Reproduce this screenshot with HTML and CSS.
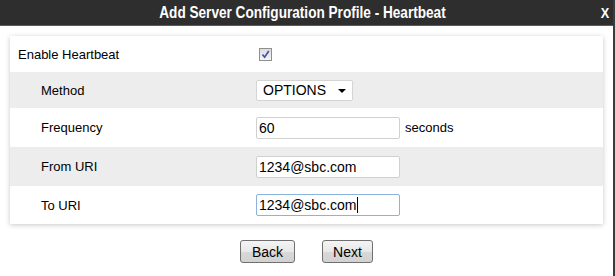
FILE: index.html
```html
<!DOCTYPE html>
<html>
<head>
  <title>Add Server Configuration Profile - Heartbeat</title>
  <link rel="stylesheet" href="styles.css">
</head>
<body>
  <div class="dialog">
    <div class="titlebar">
      <span class="title">Add Server Configuration Profile - Heartbeat</span>
      <span class="close">X</span>
    </div>

    <div class="card">
      <div class="row">
        <div class="label">Enable Heartbeat</div>
        <div class="control">
          <span class="checkbox">
            <svg width="9" height="9" viewBox="0 0 9 9"><path d="M1.5 4.5 L3.6 7.2 L7.8 1" fill="none" stroke="#3b4fa8" stroke-width="1.6"/></svg>
          </span>
        </div>
      </div>
      <div class="row alt sub">
        <div class="label">Method</div>
        <div class="control">
          <div class="select">OPTIONS <span class="arrow"></span></div>
        </div>
      </div>
      <div class="row sub tall">
        <div class="label">Frequency</div>
        <div class="control">
          <div class="field">60</div>
          <span class="unit">seconds</span>
        </div>
      </div>
      <div class="row alt sub tall">
        <div class="label">From URI</div>
        <div class="control">
          <div class="field">1234@sbc.com</div>
        </div>
      </div>
      <div class="row sub last">
        <div class="label">To URI</div>
        <div class="control">
          <div class="field focus">1234@sbc.com<span class="caret"></span></div>
        </div>
      </div>
    </div>

    <div class="buttons">
      <button class="btn back">Back</button>
      <button class="btn next">Next</button>
    </div>
  </div>
</body>
</html>
```

FILE: styles.css
```css
body {
  margin: 0;
  background-color: #3c3c3c;
  font-family: "Liberation Sans", Arial, sans-serif;
  font-size: 13px;
  color: #000000;
}

.dialog {
  width: 613px;
  height: 276px;
  background-color: #ffffff;
}

/* title bar */
.titlebar {
  height: 25px;
  padding-right: 8px;
  background-color: #2e2e2e;
  border-bottom: 1px solid #5c5c5c;
  display: flex;
  align-items: center;
  justify-content: center;
  position: relative;
  color: #ffffff;
}

/* narrow bold face, squeezed since no condensed font is installed */
.title {
  display: inline-block;
  font-family: "Liberation Sans", Arial, sans-serif;
  font-weight: bold;
  font-size: 16px;
  transform: scaleX(0.85);
  white-space: nowrap;
}

.close {
  position: absolute;
  right: 3px;
  top: 4px;
  font-family: "Liberation Sans", sans-serif;
  font-weight: bold;
  font-size: 15px;
  transform: scaleX(0.85);
}

/* form card */
.card {
  margin: 10px 10px 0 10px;
  background-color: #ffffff;
  box-shadow: 0 1px 5px rgba(0, 0, 0, 0.22);
}

.row {
  display: grid;
  grid-template-columns: 246px 1fr;
  align-items: center;
  height: 36px;
}

.row.tall {
  height: 39px;
}

.row.last {
  height: 38px;
}

.row.alt {
  background-color: #ededed;
}

.label {
  padding-left: 8px;
}

.row.sub .label {
  padding-left: 31px;
}

.control {
  display: flex;
  align-items: center;
}

.checkbox {
  width: 11px;
  height: 11px;
  margin-left: 3px;
  border: 1px solid #8f8f8f;
  background: linear-gradient(#dcdcdc, #f4f4f4);
  display: flex;
  align-items: center;
  justify-content: center;
}

.select {
  width: 89px;
  height: 19px;
  padding-left: 6px;
  border: 1px solid #d4d4d4;
  border-radius: 2px;
  background-color: #ffffff;
  font-size: 14px;
  line-height: 19px;
  position: relative;
}

.arrow {
  position: absolute;
  right: 6px;
  top: 8px;
  border-left: 4px solid transparent;
  border-right: 4px solid transparent;
  border-top: 4px solid #000000;
}

.field {
  width: 140px;
  height: 20px;
  padding-left: 2px;
  border: 1px solid #d0d0d0;
  border-radius: 2px;
  background-color: #ffffff;
  font-size: 14px;
  line-height: 20px;
  display: flex;
  align-items: center;
}

.field.focus {
  border-color: #8cb3d9;
}

.caret {
  width: 1px;
  height: 16px;
  background-color: #000000;
  margin-left: 1px;
}

.unit {
  margin-left: 5px;
}

/* buttons */
.buttons {
  display: flex;
  justify-content: center;
  gap: 27px;
  margin-top: 16px;
}

.btn {
  height: 23px;
  padding: 0;
  border: 1px solid #707070;
  border-radius: 3px;
  background: linear-gradient(#f4f4f4 0%, #e8e8e8 50%, #d8d8d8 51%, #d2d2d2 100%);
  font-family: "Liberation Sans", Arial, sans-serif;
  font-size: 14px;
  color: #000000;
}

.btn.back {
  width: 55px;
}

.btn.next {
  width: 51px;
}
```
